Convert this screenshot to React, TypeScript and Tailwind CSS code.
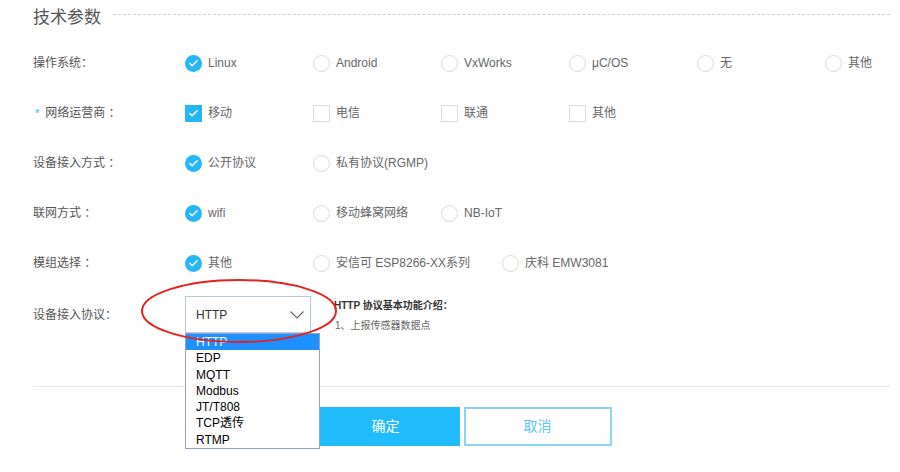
import { Check } from 'lucide-react';

type Opt = { label: string; checked?: boolean; wide?: boolean };

interface RowProps {
  label: string;
  required?: boolean;
  kind: 'radio' | 'checkbox';
  options: Opt[];
}

const font = { fontFamily: '"Liberation Sans", "Noto Sans CJK SC", sans-serif' };

function Mark({ kind, checked }: { kind: 'radio' | 'checkbox'; checked?: boolean }) {
  const shape = kind === 'radio' ? 'rounded-full' : 'rounded-none';
  if (checked) {
    return (
      <span className={`w-[17px] h-[17px] ${shape} bg-[#27b6f6] flex items-center justify-center shrink-0`}>
        <Check className="w-[11px] h-[11px] text-white" strokeWidth={3} />
      </span>
    );
  }
  return <span className={`w-[17px] h-[17px] ${shape} border border-[#dcdad6] bg-white shrink-0`} />;
}

function OptionRow({ label, required, kind, options }: RowProps) {
  return (
    <div className="h-[50px] flex items-center">
      <div className="w-[152px] shrink-0 flex items-center text-[12px] text-[#555]">
        {required && <span className="text-[#27b6f6] text-[11px] ml-[2px] mr-[6px]">*</span>}
        {label}
      </div>
      {options.map((o) => (
        <div
          key={o.label}
          className={`${o.wide ? 'w-[189px]' : 'w-[128px]'} shrink-0 flex items-center gap-[6px]`}
        >
          <Mark kind={kind} checked={o.checked} />
          <span className="text-[12px] text-[#666] whitespace-nowrap">{o.label}</span>
        </div>
      ))}
    </div>
  );
}

const protocols = ['HTTP', 'EDP', 'MQTT', 'Modbus', 'JT/T808', 'TCP透传', 'RTMP'];

export default function App() {
  return (
    <div className="relative w-[900px] h-[472px] bg-white overflow-hidden" style={font}>
      <div className="pl-[33px] pr-[10px]">
        {/* Title */}
        <div className="h-[38px] flex items-start pt-[7px]">
          <span className="text-[17px] leading-[22px] text-[#555]">技术参数</span>
          <div className="flex-1 ml-[12px] mt-[7px] border-t border-dashed border-[#cfcfcf]" />
        </div>

        <OptionRow
          label="操作系统："
          kind="radio"
          options={[
            { label: 'Linux', checked: true },
            { label: 'Android' },
            { label: 'VxWorks' },
            { label: 'μC/OS' },
            { label: '无' },
            { label: '其他' },
          ]}
        />
        <OptionRow
          label="网络运营商 ："
          required
          kind="checkbox"
          options={[{ label: '移动', checked: true }, { label: '电信' }, { label: '联通' }, { label: '其他' }]}
        />
        <OptionRow
          label="设备接入方式 ："
          kind="radio"
          options={[{ label: '公开协议', checked: true }, { label: '私有协议(RGMP)' }]}
        />
        <OptionRow
          label="联网方式 ："
          kind="radio"
          options={[{ label: 'wifi', checked: true }, { label: '移动蜂窝网络' }, { label: 'NB-IoT' }]}
        />
        <OptionRow
          label="模组选择 ："
          kind="radio"
          options={[
            { label: '其他', checked: true },
            { label: '安信可 ESP8266-XX系列', wide: true },
            { label: '庆科 EMW3081' },
          ]}
        />

        {/* Protocol select */}
        <div className="flex items-start pt-[8px]">
          <div className="w-[152px] shrink-0 h-[37px] flex items-center text-[12px] text-[#555]">设备接入协议：</div>
          <div className="relative">
            <div className="w-[126px] h-[37px] border border-[#b4c8e2] flex items-center justify-between pl-[10px] pr-[6px]">
              <span className="text-[12px] text-[#333]">HTTP</span>
              <svg width="14" height="8" viewBox="0 0 14 8">
                <polyline points="0.5,0.5 7,7 13.5,0.5" fill="none" stroke="#666" strokeWidth="1.1" />
              </svg>
            </div>
            <div className="absolute left-0 top-[37px] w-[135px] bg-white border border-[#8da6c8] z-20">
              {protocols.map((p, i) => (
                <div
                  key={p}
                  className={`h-[16.3px] leading-[16px] pl-[10px] text-[12px] ${
                    i === 0 ? 'bg-[#1e90ff] text-white' : 'text-black'
                  }`}
                >
                  {p}
                </div>
              ))}
            </div>
          </div>
          <div className="ml-[23px] text-[10px]">
            <div className="leading-[20px] font-bold text-[#333]">HTTP 协议基本功能介绍：</div>
            <div className="leading-[19px] text-[#666] pl-[1px]">1、上报传感器数据点</div>
          </div>
        </div>

        <div className="mt-[51px] border-t border-[#e4e6ee]" />

        <div className="mt-[20px] flex justify-center gap-[4px]">
          <button className="w-[148px] h-[39px] bg-[#21bcfc] text-white text-[14px]">确定</button>
          <button className="w-[148px] h-[39px] border-2 border-[#8ad6f7] text-[#5bc6f2] text-[14px] bg-white">
            取消
          </button>
        </div>
      </div>

      {/* annotation ellipse */}
      <svg className="absolute left-0 top-0 pointer-events-none z-30" width="900" height="472">
        <ellipse cx="239" cy="311" rx="97" ry="31" fill="none" stroke="#e52222" strokeWidth="2" />
      </svg>
    </div>
  );
}
